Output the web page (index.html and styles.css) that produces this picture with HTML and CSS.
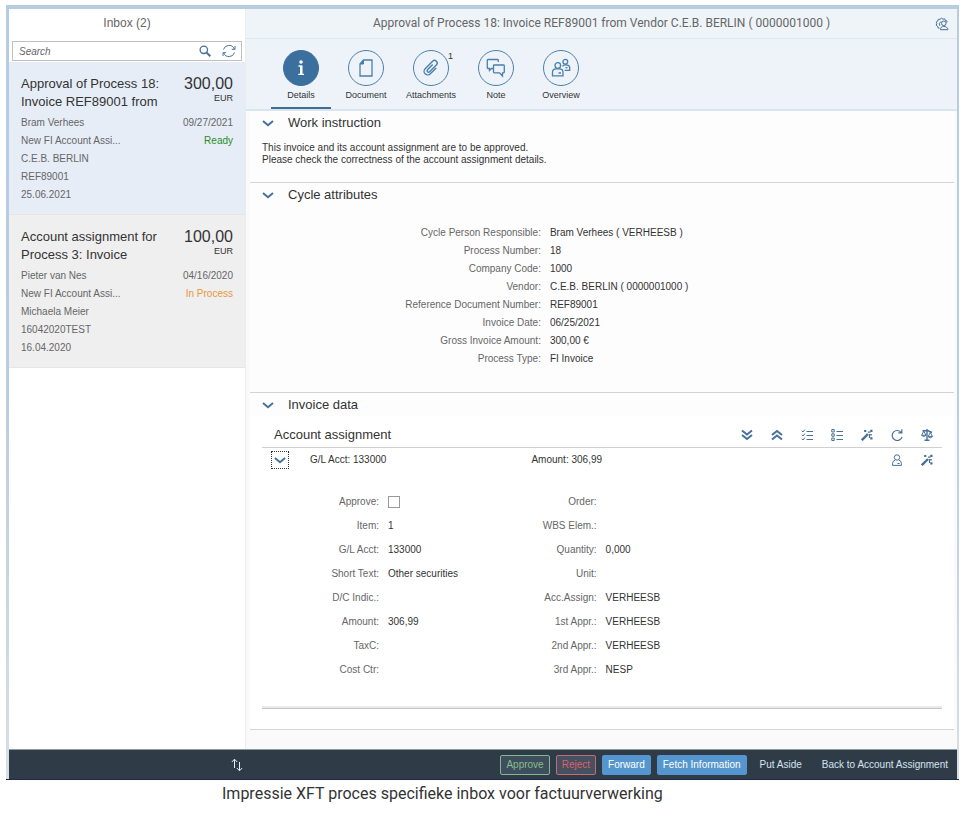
FILE: index.html
```html
<!DOCTYPE html>
<html lang="en">
<head>
    <meta charset="UTF-8">
    <meta name="viewport" content="width=device-width, initial-scale=1.0">
    <title>Inbox</title>
    <link rel="stylesheet" href="styles.css">
</head>
<body>
    <!-- shared icon shapes -->
    <svg class="sprite" aria-hidden="true">
        <symbol id="chevron" viewBox="0 0 12 12"><path d="M1 4 L6 8.2 L11 4" stroke-width="2"/></symbol>
        <symbol id="wand" viewBox="0 0 12 12">
            <path d="M.8 11.2 L7 5" stroke-width="2.4"/>
            <path d="M3 2h2 M7 3.2h2.5 M8.5 5v4" stroke-width="1.2"/>
            <path d="M9.2 .8h2.3v2.3h-2.3z M9.2 8.3h2.3v2.3h-2.3z M3.3 1h2v2h-2z M9.2 5h1.6v1.4h-1.6z" fill="currentColor" stroke="none"/>
        </symbol>
    </svg>

    <figure class="figure">
        <div class="app">
            <div class="main">
                <aside class="sidebar">
                    <h1 class="bar-title">Inbox (2)</h1>
                    <form class="search">
                        <input type="text" placeholder="Search" aria-label="Search">
                        <button type="button" class="icon-btn" aria-label="Find">
                            <svg width="12" height="12" viewBox="0 0 12 12"><circle cx="4.8" cy="4.8" r="3.7" stroke-width="1.3"/><path d="M7.6 7.6 L11.3 11.3" stroke-width="2"/></svg>
                        </button>
                        <button type="button" class="icon-btn" aria-label="Refresh">
                            <svg width="14" height="14" viewBox="0 0 14 14"><path d="M1.5 5.5 A5.7 5.7 0 0 1 12.3 5 M13 2 V5.3 H9.8 M12.5 8.5 A5.7 5.7 0 0 1 1.7 9 M1 12 V8.7 H4.2"/></svg>
                        </button>
                    </form>
                    <a href="#" class="item selected">
                        <div class="item-head">
                            <h2>Approval of Process 18: Invoice REF89001 from</h2>
                            <p class="price">300,00<span>EUR</span></p>
                        </div>
                        <div class="row"><span>Bram Verhees</span><span>09/27/2021</span></div>
                        <div class="row"><span>New FI Account Assi...</span><span class="ready">Ready</span></div>
                        <div class="row">C.E.B. BERLIN</div>
                        <div class="row">REF89001</div>
                        <div class="row">25.06.2021</div>
                    </a>
                    <a href="#" class="item">
                        <div class="item-head">
                            <h2>Account assignment for Process 3: Invoice</h2>
                            <p class="price">100,00<span>EUR</span></p>
                        </div>
                        <div class="row"><span>Pieter van Nes</span><span>04/16/2020</span></div>
                        <div class="row"><span>New FI Account Assi...</span><span class="process">In Process</span></div>
                        <div class="row">Michaela Meier</div>
                        <div class="row">16042020TEST</div>
                        <div class="row">16.04.2020</div>
                    </a>
                </aside>

                <main class="detail">
                    <header class="detail-header">
                        <h1 class="bar-title">Approval of Process 18: Invoice REF89001 from Vendor C.E.B. BERLIN ( 0000001000 )</h1>
                        <button type="button" class="icon-btn" aria-label="User settings">
                            <svg width="14" height="14" viewBox="0 0 14 14"><path d="M11.8 5.5 L12 4 L10.5 3.5 L9.7 1.8 L8 2.2 L6.5 1.2 L5 2.3 L3.3 2.3 L2.8 4 L1.2 5 L1.8 6.7 L1.2 8.3 L2.7 9.3 L3 11 L4.5 11.2"/><path d="M6 4.5 A3.3 3.3 0 0 0 4.8 8.8"/><circle cx="8.8" cy="6.3" r="2.3"/><path d="M5.5 12.7 C5.5 10.5 6.8 9.4 8.8 9.4 S12.8 10.5 13 12.7 Z"/></svg>
                        </button>
                    </header>

                    <nav class="tabs">
                        <button type="button" class="tab active">
                            <span class="circle"><svg width="18" height="18" viewBox="0 0 18 18"><circle cx="9" cy="3" r="1.8" fill="currentColor" stroke="none"/><path d="M6.5 7 H9.6 V14.8 M6.3 15.3 H12" stroke-width="1.3"/><path d="M9.2 7 V15" stroke-width="2.4"/></svg></span>
                            Details
                        </button>
                        <button type="button" class="tab">
                            <span class="circle"><svg width="18" height="18" viewBox="0 0 18 18"><path d="M6.5 1 H15 V17 H3 V5 Z" stroke-width="1.3"/><path d="M6.5 1 V5 H3 Z" fill="currentColor"/></svg></span>
                            Document
                        </button>
                        <button type="button" class="tab">
                            <span class="circle"><svg width="22" height="22" viewBox="0 0 24 24"><path d="M16 8 V17 a4 4 0 0 1 -8 0 V5.5 a2.9 2.9 0 0 1 5.8 0 V16 a1.6 1.6 0 0 1 -3.2 0 V8" transform="rotate(45 12 12)" stroke-width="1.5"/></svg><sup class="count">1</sup></span>
                            Attachments
                        </button>
                        <button type="button" class="tab">
                            <span class="circle"><svg width="20" height="20" viewBox="0 0 20 20"><path d="M7 10.5 H5.5 L3.5 12.5 V10.5 H2 Q1.3 10.5 1.3 9.7 V2.3 Q1.3 1.5 2 1.5 H11.5 Q12.3 1.5 12.3 2.3 V4" stroke-width="1.3"/><path d="M8.3 7 H17.5 Q18.3 7 18.3 7.8 V14 Q18.3 14.8 17.5 14.8 H16.5 V18 L13.5 14.8 H8.3 Q7.5 14.8 7.5 14 V7.8 Q7.5 7 8.3 7 Z" stroke-width="1.3"/></svg></span>
                            Note
                        </button>
                        <button type="button" class="tab">
                            <span class="circle"><svg width="20" height="20" viewBox="0 0 20 20" stroke-width="1.3"><circle cx="6.8" cy="7.5" r="2.8"/><path d="M1.5 17.8 V14.5 Q1.5 10.8 5 10.8 H8.6 Q12 10.8 12 14.5 V17.8 Z M7.5 15 H10"/><circle cx="14.3" cy="3.8" r="2.4"/><path d="M11.5 8.3 Q12.5 6.8 14.3 6.8 Q18.7 6.8 18.7 9.5 V12.3 H13.7 M14.5 9.7 H16.5"/></svg></span>
                            Overview
                        </button>
                    </nav>

                    <section class="panel">
                        <h2 class="panel-title"><button type="button" class="icon-btn" aria-label="Collapse"><svg width="12" height="12"><use href="#chevron"/></svg></button>Work instruction</h2>
                        <p class="instruction">This invoice and its account assignment are to be approved.<br>Please check the correctness of the account assignment details.</p>
                    </section>

                    <section class="panel">
                        <h2 class="panel-title"><button type="button" class="icon-btn" aria-label="Collapse"><svg width="12" height="12"><use href="#chevron"/></svg></button>Cycle attributes</h2>
                        <dl class="attributes">
                            <dt>Cycle Person Responsible:</dt><dd>Bram Verhees ( VERHEESB )</dd>
                            <dt>Process Number:</dt><dd>18</dd>
                            <dt>Company Code:</dt><dd>1000</dd>
                            <dt>Vendor:</dt><dd>C.E.B. BERLIN ( 0000001000 )</dd>
                            <dt>Reference Document Number:</dt><dd>REF89001</dd>
                            <dt>Invoice Date:</dt><dd>06/25/2021</dd>
                            <dt>Gross Invoice Amount:</dt><dd>300,00 €</dd>
                            <dt>Process Type:</dt><dd>FI Invoice</dd>
                        </dl>
                    </section>

                    <section class="panel">
                        <h2 class="panel-title"><button type="button" class="icon-btn" aria-label="Collapse"><svg width="12" height="12"><use href="#chevron"/></svg></button>Invoice data</h2>
                        <div class="assignment">
                            <div class="toolbar">
                                <h3>Account assignment</h3>
                                <button type="button" class="icon-btn" aria-label="Expand all"><svg width="12" height="12" viewBox="0 0 12 12"><path d="M1 1.5 L6 5.5 L11 1.5 M1 6 L6 10 L11 6" stroke-width="2"/></svg></button>
                                <button type="button" class="icon-btn" aria-label="Collapse all"><svg width="12" height="12" viewBox="0 0 12 12"><path d="M1 6 L6 2 L11 6 M1 10.5 L6 6.5 L11 10.5" stroke-width="2"/></svg></button>
                                <button type="button" class="icon-btn" aria-label="Select all"><svg width="12" height="12" viewBox="0 0 12 12"><path d="M.8 1.8 L2 3 L4 .5 M.8 5.8 L2 7 L4 4.5 M.8 9.8 L2 11 L4 8.5 M5.5 2.5 H12 M5.5 6.5 H12 M5.5 10.5 H12"/></svg></button>
                                <button type="button" class="icon-btn" aria-label="Deselect all"><svg width="12" height="12" viewBox="0 0 12 12"><path d="M.8 .5 H3.2 V3 H.8 Z M.8 4.8 H3.2 V7.2 H.8 Z M.8 9 H3.2 V11.5 H.8 Z M5.5 2.5 H12 M5.5 6.5 H12 M5.5 10.5 H12"/></svg></button>
                                <button type="button" class="icon-btn" aria-label="Propose"><svg width="12" height="12"><use href="#wand"/></svg></button>
                                <button type="button" class="icon-btn" aria-label="Reset"><svg width="12" height="12" viewBox="0 0 12 12"><path d="M10.3 3.6 A5 5 0 1 0 11 8 M10.8 .3 V3.8 H7.3" stroke-width="1.2"/></svg></button>
                                <button type="button" class="icon-btn" aria-label="Compare"><svg width="12" height="12" viewBox="0 0 12 12"><path d="M6 0 V11.5 M1.5 1.8 H7 L11 3.5 M3.5 11.3 H8.5" stroke-width="1.4"/><path d="M2.8 2 L.8 6 M2.8 2 L4.8 6 M.5 6.3 H5 Q2.8 8.8 .5 6.3 Z M9.3 3.5 L7.3 7.3 M9.3 3.5 L11.3 7.3 M7 7.6 H11.5 Q9.3 10 7 7.6 Z"/></svg></button>
                            </div>
                            <div class="line-item">
                                <button type="button" class="icon-btn toggle" aria-label="Toggle line"><svg width="12" height="12"><use href="#chevron"/></svg></button>
                                <span class="account">G/L Acct: 133000</span>
                                <span class="amount">Amount: 306,99</span>
                                <button type="button" class="icon-btn" aria-label="Approver"><svg width="12" height="12" viewBox="0 0 12 12"><circle cx="6" cy="3.5" r="2.7"/><path d="M1.6 11.4 V9.3 Q1.6 7 4 6.2 M8 6.2 Q10.4 7 10.4 9.3 V11.4 H1.6 M6.5 9.5 H8.7"/></svg></button>
                                <button type="button" class="icon-btn" aria-label="Propose"><svg width="12" height="12"><use href="#wand"/></svg></button>
                            </div>
                            <div class="fields">
                                <dl>
                                    <dt><label for="approve">Approve:</label></dt><dd><input type="checkbox" id="approve"></dd>
                                    <dt>Item:</dt><dd>1</dd>
                                    <dt>G/L Acct:</dt><dd>133000</dd>
                                    <dt>Short Text:</dt><dd>Other securities</dd>
                                    <dt>D/C Indic.:</dt><dd></dd>
                                    <dt>Amount:</dt><dd>306,99</dd>
                                    <dt>TaxC:</dt><dd></dd>
                                    <dt>Cost Ctr:</dt><dd></dd>
                                </dl>
                                <dl>
                                    <dt>Order:</dt><dd></dd>
                                    <dt>WBS Elem.:</dt><dd></dd>
                                    <dt>Quantity:</dt><dd>0,000</dd>
                                    <dt>Unit:</dt><dd></dd>
                                    <dt>Acc.Assign:</dt><dd>VERHEESB</dd>
                                    <dt>1st Appr.:</dt><dd>VERHEESB</dd>
                                    <dt>2nd Appr.:</dt><dd>VERHEESB</dd>
                                    <dt>3rd Appr.:</dt><dd>NESP</dd>
                                </dl>
                            </div>
                        </div>
                    </section>
                </main>
            </div>

            <footer class="footer">
                <div class="footer-left">
                    <button type="button" class="icon-btn" aria-label="Sort"><svg width="12" height="14" viewBox="0 0 12 14"><path d="M3.5 10 V1.5 M.8 4 L3.5 1.2 L6.2 4 M8.5 4 V12.5 M5.8 10 L8.5 12.8 L11.2 10"/></svg></button>
                </div>
                <div class="actions">
                    <button type="button" class="approve">Approve</button>
                    <button type="button" class="reject">Reject</button>
                    <button type="button" class="primary">Forward</button>
                    <button type="button" class="primary">Fetch Information</button>
                    <button type="button">Put Aside</button>
                    <button type="button">Back to Account Assignment</button>
                </div>
            </footer>
        </div>
        <figcaption>Impressie XFT proces specifieke inbox voor factuurverwerking</figcaption>
    </figure>
</body>
</html>
```
FILE: styles.css
```css
* {
    box-sizing: border-box;
}

body {
    margin: 0;
    background-color: #fff;
    color: #333;
    font-family: "Liberation Sans", Arial, sans-serif;
    font-size: 10px;
}

h1, h2, h3, p, dl, dd {
    margin: 0;
    font-weight: normal;
}

button, input {
    font-family: inherit;
    font-size: 10px;
    color: inherit;
}

svg {
    display: block;
    fill: none;
    stroke: currentColor;
}

.sprite {
    position: absolute;
    width: 0;
    height: 0;
}

.figure {
    margin: 5px 11px 0 6px;
}

.app {
    padding: 4px 2px 0 3px;
    background: linear-gradient(#b5cce1, #b9cde0 50%, #d8dfe5);
    border-bottom: 1px solid #1c2a4a;
}

.main {
    display: flex;
}

.icon-btn {
    display: flex;
    align-items: center;
    justify-content: center;
    width: 24px;
    height: 18px;
    padding: 0;
    border: none;
    background: none;
    color: #477199;
    cursor: pointer;
}

.bar-title {
    font-size: 12px;
    line-height: 29px;
    text-align: center;
    color: #666;
}

/* Inbox list */
.sidebar {
    width: 237px;
    flex: none;
    background-color: #fff;
    border-right: 1px solid #ececec;
}

.search {
    display: flex;
    align-items: center;
    height: 20px;
    margin: 3px 3px 1px;
    border: 1px solid #bfbfbf;
}

.search input {
    flex: 1;
    min-width: 0;
    padding: 0 6px;
    border: none;
    outline: none;
    background: none;
}

.search input::placeholder {
    color: #666;
    font-style: italic;
}

.item {
    display: block;
    padding: 13px 12px 10px;
    background-color: #efefef;
    border-bottom: 1px solid #e5e5e5;
    color: #666;
    text-decoration: none;
}

.selected {
    background-color: #e6edf6;
}

.item-head {
    display: flex;
    justify-content: space-between;
    margin-bottom: 3px;
    color: #333;
}

.item-head h2 {
    width: 146px;
    font-size: 13px;
    line-height: 18px;
}

.price {
    font-size: 16px;
    line-height: 18px;
    text-align: right;
}

.price span {
    display: block;
    font-size: 9px;
    line-height: 10px;
}

.row {
    display: flex;
    justify-content: space-between;
    line-height: 18px;
}

.ready {
    color: #2b8a2b;
}

.process {
    color: #e9973a;
}

/* Detail area */
.detail {
    flex: 1;
    padding-bottom: 19px;
    background-color: #fafafa;
}

.detail-header {
    display: grid;
    grid-template-columns: 1fr auto 1fr;
    align-items: center;
    padding: 0 3px;
    background-color: #eff4f9;
    border-bottom: 1px solid #dde7f0;
}

.detail-header .bar-title {
    grid-column: 2;
    font-family: Roboto, sans-serif;
}

.detail-header .icon-btn {
    justify-self: end;
}

.tabs {
    display: flex;
    gap: 5px;
    padding: 11px 25px 0;
    background-color: #edf3f9;
    border-bottom: 2px solid #d9e5ef;
}

.tab {
    display: flex;
    flex-direction: column;
    align-items: center;
    gap: 4px;
    width: 60px;
    height: 59px;
    padding: 0;
    border: none;
    border-bottom: 2px solid transparent;
    background: none;
    font-size: 9px;
    line-height: 10px;
    cursor: pointer;
}

.active {
    border-color: #3d6f9b;
}

.circle {
    position: relative;
    display: flex;
    align-items: center;
    justify-content: center;
    width: 36px;
    height: 36px;
    border: 1px solid #4a7fae;
    border-radius: 50%;
    color: #4a7fae;
}

.active .circle {
    background-color: #3a6f9e;
    border-color: #3a6f9e;
    color: #fff;
}

.count {
    position: absolute;
    top: 0;
    right: -5px;
    color: #333;
    font-size: 9px;
}

.panel {
    margin: 0 3px 0 4px;
    background-color: #fdfdfd;
    border-bottom: 1px solid #d4d4d4;
}

.panel-title {
    display: flex;
    align-items: center;
    gap: 8px;
    height: 23px;
    padding-left: 6px;
    font-size: 13px;
}

.instruction {
    padding: 8px 12px 16px;
    line-height: 12px;
}

.attributes {
    display: grid;
    grid-template-columns: 18fr 25fr;
    column-gap: 9px;
    padding: 18px 0 24px;
    line-height: 18px;
}

dt {
    color: #666;
    text-align: right;
}

.assignment {
    padding: 6px 12px 20px;
    background-color: #fff;
}

.toolbar {
    display: flex;
    align-items: center;
    height: 26px;
    padding-left: 12px;
    border-bottom: 1px solid #cfcfcf;
}

.toolbar h3 {
    flex: 1;
    font-size: 13px;
}

.toolbar .icon-btn, .line-item .icon-btn {
    width: 30px;
}

.line-item {
    display: flex;
    align-items: center;
    height: 23px;
    padding-left: 9px;
}

.line-item .toggle {
    width: 18px;
    border: 1px dotted #333;
}

.account {
    width: 33%;
    margin-left: 21px;
}

.amount {
    flex: 1;
}

.fields {
    display: flex;
    padding: 19px 0 26px;
    border-bottom: 1px solid #c4c4c4;
    box-shadow: inset 0 -2px #ebebeb;
}

.fields dl {
    display: grid;
    grid-template-columns: 117px 1fr;
    grid-auto-rows: 24px;
    column-gap: 9px;
    width: 32%;
    line-height: 24px;
}

.fields input {
    appearance: none;
    display: block;
    width: 12px;
    height: 12px;
    margin: 6px 0;
    border: 1px solid #999;
    background-color: #fff;
}

/* Footer bar */
.footer {
    display: flex;
    align-items: center;
    height: 30px;
    background-color: #2f3c48;
    border-top: 1px solid #8c9aa6;
    color: #d5e3f0;
}

.footer-left {
    width: 240px;
}

.footer .icon-btn {
    margin-left: auto;
    color: #e6eef5;
}

.actions {
    flex: 1;
    display: flex;
    justify-content: flex-end;
    gap: 6px;
    padding-right: 2px;
}

.actions button {
    height: 20px;
    padding: 0 6px;
    border: 1px solid transparent;
    border-radius: 2px;
    background: none;
    cursor: pointer;
}

.actions .approve, .actions .reject {
    padding: 0 5px;
}

.actions .approve {
    background-color: #3f4e5c;
    border-color: #7fb894;
    color: #84bf8c;
}

.actions .reject {
    background-color: #46505f;
    border-color: #c76a78;
    color: #dc6070;
}

.actions .primary {
    padding: 0 5px;
    background-color: #5496cd;
    border-color: #5496cd;
    color: #fff;
}

figcaption {
    font-family: Roboto, sans-serif;
    font-size: 16px;
    line-height: 28px;
    padding-left: 216px;
}
```
